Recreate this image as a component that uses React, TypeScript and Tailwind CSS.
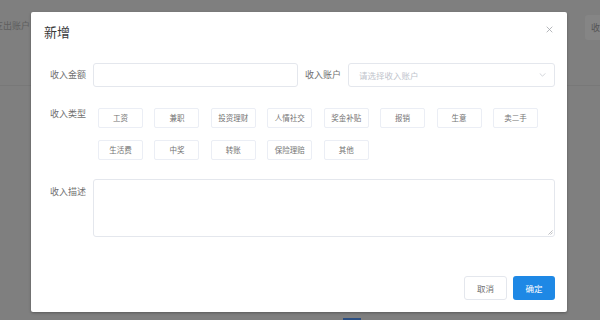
import React from "react";

const types1 = ["工资", "兼职", "投资理财", "人情社交", "奖金补贴", "报销", "生意", "卖二手"];
const types2 = ["生活费", "中奖", "转账", "保险理赔", "其他"];

const font = { fontFamily: '"Noto Sans CJK SC", "Noto Sans", sans-serif' };

export default function App() {
  const all = [...types1, ...types2];
  return (
    <div className="relative w-[600px] h-[320px] overflow-hidden bg-[#7f7f7f]" style={font}>
      {/* page behind overlay */}
      <div className="flex flex-col h-full">
        <div className="flex items-start justify-between pt-[15px] h-[86px] border-b border-[#787878]">
          <div className="ml-[-6px] mt-[5px] text-[9px] leading-[12px] text-[#5e5e5e]">支出账户</div>
          <div className="mr-[-20px] w-[35px] h-[25px] rounded-[3px] bg-[#858585] flex items-center pl-[6px] text-[9px] text-[#555]">收</div>
        </div>
        <div className="flex-1" />
        <div className="flex justify-center">
          <div className="ml-[104px] w-[18px] h-[2px] bg-[#2c4f82]" />
        </div>
      </div>

      {/* modal */}
      <div className="absolute left-[31px] top-[12px] w-[536px] h-[300px] bg-white rounded-[2px] shadow-[0_1px_3px_rgba(0,0,0,0.3)] flex flex-col">
        <div className="flex items-center justify-between pl-[13px] pr-[14px] h-[39px] pt-[1px]">
          <span className="text-[13px] leading-[16px] text-[#3a3a3a]">新增</span>
          <svg width="7" height="7" viewBox="0 0 10 10" className="mt-[-5px]">
            <path d="M1 1L9 9M9 1L1 9" stroke="#a0a3a8" strokeWidth="1.1" fill="none" />
          </svg>
        </div>

        <div className="flex flex-col px-[12px] mt-[12px]">
          {/* row 1 */}
          <div className="flex items-center h-[24px]">
            <div className="w-[50px] pr-[7px] text-right text-[9px] leading-[12px] text-[#707070]">收入金额</div>
            <div className="w-[205px] h-[24px] border border-[#e4e7ed] rounded-[3px]" />
            <div className="w-[50px] pr-[7px] text-right text-[9px] leading-[12px] text-[#707070]">收入账户</div>
            <div className="w-[207px] h-[24px] border border-[#e4e7ed] rounded-[3px] flex items-center justify-between pl-[10px] pr-[8px]">
              <span className="text-[8.5px] text-[#c0c4cc]">请选择收入账户</span>
              <svg width="7" height="4" viewBox="0 0 8 5">
                <path d="M0.5 0.5L4 4L7.5 0.5" stroke="#c0c4cc" strokeWidth="0.9" fill="none" />
              </svg>
            </div>
          </div>

          {/* row 2 */}
          <div className="flex items-start mt-[21px]">
            <div className="w-[50px] pr-[7px] text-right text-[9px] leading-[12px] text-[#707070] shrink-0">收入类型</div>
            <div className="ml-[5px] w-[458px] flex flex-wrap gap-x-[11.43px] gap-y-[12px]">
              {all.map((t) => (
                <div
                  key={t}
                  className="w-[45px] h-[20px] border border-[#ebeef5] rounded-[2px] flex items-center justify-center text-[7.5px] text-[#737373]"
                >
                  {t}
                </div>
              ))}
            </div>
          </div>

          {/* row 3 */}
          <div className="flex items-start mt-[19px]">
            <div className="w-[50px] pr-[7px] pt-[7px] text-right text-[9px] leading-[12px] text-[#707070] shrink-0">收入描述</div>
            <div className="relative w-[463px] h-[58px] border border-[#e4e7ed] rounded-[3px]">
              <svg width="5" height="5" viewBox="0 0 6 6" className="absolute right-[1px] bottom-[1px]">
                <path d="M0.5 5.5L5.5 0.5M3 5.5L5.5 3" stroke="#909399" strokeWidth="0.7" fill="none" />
              </svg>
            </div>
          </div>
        </div>

        <div className="flex-1" />
        <div className="flex justify-end gap-[6px] pr-[12px] pb-[12px]">
          <div className="w-[43px] h-[24px] border border-[#e4e7ed] rounded-[3px] flex items-center justify-center text-[8.5px] text-[#707070]">取消</div>
          <div className="w-[42px] h-[24px] bg-[#1e88e5] rounded-[3px] flex items-center justify-center text-[8.5px] text-white">确定</div>
        </div>
      </div>
    </div>
  );
}
